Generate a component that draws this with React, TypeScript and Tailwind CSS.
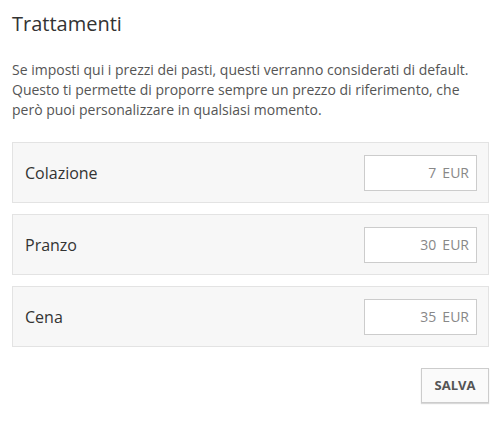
export default function App() {
  const rows = [
    { label: "Colazione", value: "7" },
    { label: "Pranzo", value: "30" },
    { label: "Cena", value: "35" },
  ];
  return (
    <div className="w-[503px] h-[421px] bg-white pl-3 pr-[14px] pt-[10px] text-[#333]" style={{ fontFamily: '"Open Sans", sans-serif' }}>
      <h1 className="text-[20px] leading-[28px] text-[#333]">Trattamenti</h1>
      <p className="mt-[22px] text-[14px] leading-[20px] text-[#555]">
        Se imposti qui i prezzi dei pasti, questi verranno considerati di default. Questo ti permette di proporre sempre un prezzo di riferimento, che però puoi personalizzare in qualsiasi momento.
      </p>
      <div className="mt-[22px] flex flex-col gap-[11px]">
        {rows.map((r) => (
          <div key={r.label} className="flex h-[61px] items-center justify-between border border-[#e3e3e3] bg-[#f7f7f7] pl-[12px] pr-[11px]">
            <span className="text-[16px] text-[#333]">{r.label}</span>
            <div className="flex h-[36px] w-[113px] items-center justify-end border border-[#ccc] bg-white pr-[7px] text-[14px] text-[#888]">
              <span>{r.value}</span>
              <span className="ml-[6px]">EUR</span>
            </div>
          </div>
        ))}
      </div>
      <div className="mt-[21px] flex justify-end">
        <button className="h-[35px] w-[68px] border border-[#ccc] bg-[#fafafa] text-[13px] font-bold text-[#555] shadow-[0_1px_1px_rgba(0,0,0,0.15)]">
          SALVA
        </button>
      </div>
    </div>
  );
}
